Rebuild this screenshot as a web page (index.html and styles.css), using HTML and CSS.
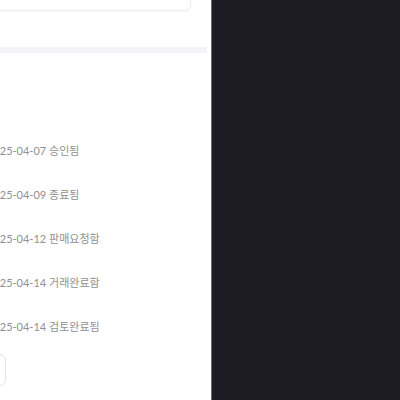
FILE: index.html
```html
<!DOCTYPE html>
<html lang="ko">
<head>
<meta charset="utf-8">
<link rel="stylesheet" href="styles.css">
</head>
<body>
<div class="screen">
  <section class="panel">
    <div class="view">
      <div class="card"></div>
      <div class="divider"></div>
      <ul class="history">
        <li>2025-04-07 승인됨</li>
        <li>2025-04-09 종료됨</li>
        <li>2025-04-12 판매요청함</li>
        <li>2025-04-14 거래완료함</li>
        <li>2025-04-14 검토완료됨</li>
      </ul>
      <div class="btn"></div>
    </div>
  </section>
  <aside class="dark"></aside>
</div>
</body>
</html>
```
FILE: styles.css
```css
html, body { margin: 0; padding: 0; }
body { width: 400px; height: 400px; overflow: hidden; background: #ffffff; font-family: Lato, "Noto Sans CJK KR", sans-serif; }
.screen { display: flex; width: 400px; height: 400px; }
.panel { width: 211px; background: #ffffff; overflow: hidden; border-right: 1px solid #6b6b70; }
.view { margin-left: -40px; margin-top: -29px; display: flex; flex-direction: column; }
.card { height: 38px; margin-right: 20px; border: 1px solid #ececf0; border-radius: 6px; background: #fff; box-shadow: 0 1px 2px rgba(0,0,0,0.03); }
.divider { height: 6px; margin-top: 36px; margin-right: 4px; background: #f3f4f8; }
.history { list-style: none; margin: 76px 0 0; padding: 0 0 0 27px; }
.history li { height: 44px; line-height: 44px; font-size: 11px; color: #909093; white-space: nowrap; }
.btn { margin-top: 5px; width: 44px; height: 30px; border: 1px solid #e6e6ea; border-radius: 6px; background: #fff; }
.dark { flex: 1; background: #1c1c22; }
```
